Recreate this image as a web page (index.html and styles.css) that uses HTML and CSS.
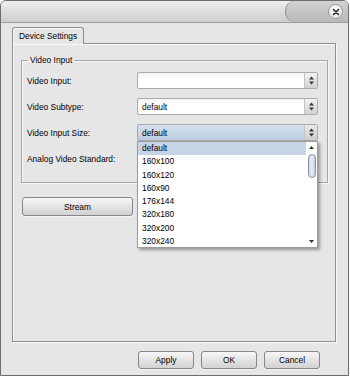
FILE: index.html
```html
<!DOCTYPE html>
<html lang="en">
<head>
    <meta charset="UTF-8">
    <meta name="viewport" content="width=device-width, initial-scale=1.0">
    <title>Device Settings</title>
    <link rel="stylesheet" href="styles.css">
</head>
<body>
    <div class="window">
        <!-- Title bar with close tab -->
        <div class="titlebar">
            <div class="close-tab">
                <span class="close-btn">
                    <svg width="8" height="8" viewBox="0 0 8 8"><path d="M1.5 1.5 L6.5 6.5 M6.5 1.5 L1.5 6.5" stroke="#2a2a2a" stroke-width="1.6" stroke-linecap="round"/></svg>
                </span>
            </div>
        </div>

        <div class="tabs">
            <div class="tab">Device Settings</div>
        </div>

        <div class="pane">
            <fieldset class="group">
                <legend>Video Input</legend>

                <div class="row">
                    <label>Video Input:</label>
                    <div class="combo">
                        <span class="combo-text"></span>
                        <span class="combo-arrow"><svg width="5" height="9" viewBox="0 0 5 9"><path d="M0 3.5 L2.5 0.5 L5 3.5 Z M0 5.5 L2.5 8.5 L5 5.5 Z" fill="#333"/></svg></span>
                    </div>
                </div>

                <div class="row">
                    <label>Video Subtype:</label>
                    <div class="combo">
                        <span class="combo-text">default</span>
                        <span class="combo-arrow"><svg width="5" height="9" viewBox="0 0 5 9"><path d="M0 3.5 L2.5 0.5 L5 3.5 Z M0 5.5 L2.5 8.5 L5 5.5 Z" fill="#333"/></svg></span>
                    </div>
                </div>

                <div class="row">
                    <label>Video Input Size:</label>
                    <div class="combo combo-open">
                        <span class="combo-text">default</span>
                        <span class="combo-arrow"><svg width="5" height="9" viewBox="0 0 5 9"><path d="M0 3.5 L2.5 0.5 L5 3.5 Z M0 5.5 L2.5 8.5 L5 5.5 Z" fill="#333"/></svg></span>

                        <!-- Open dropdown list -->
                        <div class="dropdown">
                            <ul class="options">
                                <li class="selected">default</li>
                                <li>160x100</li>
                                <li>160x120</li>
                                <li>160x90</li>
                                <li>176x144</li>
                                <li>320x180</li>
                                <li>320x200</li>
                                <li>320x240</li>
                            </ul>
                            <div class="scrollbar">
                                <svg class="sb-arrow" width="5" height="3" viewBox="0 0 5 3"><path d="M0 3 L2.5 0 L5 3 Z" fill="#333"/></svg>
                                <div class="thumb"></div>
                                <div class="sb-space"></div>
                                <svg class="sb-arrow" width="5" height="3" viewBox="0 0 5 3"><path d="M0 0 L2.5 3 L5 0 Z" fill="#333"/></svg>
                            </div>
                        </div>
                    </div>
                </div>

                <div class="row">
                    <label>Analog Video Standard:</label>
                    <div class="combo">
                        <span class="combo-text"></span>
                        <span class="combo-arrow"><svg width="5" height="9" viewBox="0 0 5 9"><path d="M0 3.5 L2.5 0.5 L5 3.5 Z M0 5.5 L2.5 8.5 L5 5.5 Z" fill="#333"/></svg></span>
                    </div>
                </div>
            </fieldset>

            <button class="btn stream-btn">Stream</button>
        </div>

        <!-- Dialog buttons -->
        <div class="footer">
            <button class="btn">Apply</button>
            <button class="btn">OK</button>
            <button class="btn">Cancel</button>
        </div>
    </div>
</body>
</html>
```

FILE: styles.css
```css
body {
    margin: 0;
    padding: 0;
    background-color: #ffffff;
    font-family: "Liberation Sans", Arial, sans-serif;
    font-size: 8.4px;
    color: #000;
}
.window {
    width: 349px;
    height: 376px;
    box-sizing: border-box;
    border: 1px solid #6c6c6c;
    border-radius: 6px 6px 0 0;
    background-color: #e6e6e6;
    overflow: hidden;
}
.titlebar {
    height: 21px;
    border-bottom: 1px solid #9c9c9c;
    background: linear-gradient(#eeeeee, #cdcdcd);
    display: flex;
    justify-content: flex-end;
}
.close-tab {
    width: 63px;
    height: 21px;
    box-sizing: border-box;
    border-left: 1px solid #8a8a8a;
    border-radius: 9px 0 0 9px / 11px 0 0 11px;
    background: linear-gradient(#d2d2d2, #b9b9b9);
    display: flex;
    align-items: center;
    justify-content: flex-end;
    padding-right: 5px;
}
.close-btn {
    width: 13px;
    height: 13px;
    border-radius: 50%;
    border: 1px solid #9a9a9a;
    background: radial-gradient(circle at 45% 35%, #ffffff, #dcdcdc);
    display: flex;
    align-items: center;
    justify-content: center;
}
.tabs {
    display: flex;
    margin-top: 4px;
    padding-left: 11px;
}
.tab {
    position: relative;
    z-index: 1;
    width: 72px;
    height: 17px;
    box-sizing: border-box;
    border: 1px solid #8c8c8c;
    border-bottom: none;
    border-radius: 3px 3px 0 0;
    background-color: #e6e6e6;
    box-shadow: inset 1px 1px 0 #fafafa;
    padding: 3px 0 0 6px;
    margin-bottom: -1px;
}
.pane {
    margin-left: 11px;
    width: 324px;
    height: 299px;
    box-sizing: border-box;
    border: 1px solid #8f8f8f;
    box-shadow: inset 1px 1px 0 #fafafa, 1px 1px 0 #fafafa;
    padding: 11px 7px 0 8px;
}
.group {
    margin: 0;
    width: 307px;
    height: 128px;
    box-sizing: border-box;
    border: 1px solid #a6a6a6;
    box-shadow: inset 1px 1px 0 #f8f8f8, 1px 1px 0 #f8f8f8;
    padding: 6px 9px 0 5px;
    display: flex;
    flex-direction: column;
    gap: 9px;
}
.group legend {
    padding: 0 2px;
    margin-left: 1px;
    line-height: 11px;
}
.row {
    display: flex;
    align-items: center;
    height: 17px;
}
.row label {
    width: 110px;
}
.combo {
    position: relative;
    width: 181px;
    height: 17px;
    box-sizing: border-box;
    border: 1px solid #ababab;
    border-radius: 2px;
    background: linear-gradient(#f4f4f4, #ffffff 40%);
    display: flex;
    align-items: center;
}
.combo-open {
    background: linear-gradient(#d6e1ee, #bccde2);
}
.combo-text {
    flex: 1;
    padding-left: 4px;
}
.combo-arrow {
    width: 12px;
    height: 15px;
    border-left: 1px solid #c4c4c4;
    background: linear-gradient(#f2f2f2, #d2d2d2);
    display: flex;
    align-items: center;
    justify-content: center;
}
.combo-open .combo-arrow {
    background: linear-gradient(#e8e8e8, #cfcfcf);
}
.dropdown {
    position: absolute;
    top: 16px;
    left: -1px;
    z-index: 5;
    width: 181px;
    height: 107px;
    box-sizing: border-box;
    border: 1px solid #9c9c9c;
    background-color: #ffffff;
    box-shadow: 2px 2px 3px rgba(0, 0, 0, 0.35);
    display: flex;
}
.options {
    list-style: none;
    margin: 0;
    padding: 0;
    flex: 1;
}
.options li {
    height: 13.25px;
    line-height: 13.25px;
    padding-left: 4px;
}
.options li.selected {
    background-color: #c5d4e7;
}
.scrollbar {
    width: 11px;
    display: flex;
    flex-direction: column;
    align-items: center;
    padding: 4px 0;
    box-sizing: border-box;
}
.sb-arrow {
    flex: none;
}
.thumb {
    margin-top: 5px;
    width: 8px;
    height: 24px;
    box-sizing: border-box;
    border: 1px solid #8596ae;
    border-radius: 4px;
    background: linear-gradient(90deg, #cfd9e6, #e8eef5, #bfcbdc);
}
.sb-space {
    flex: 1;
}
.btn {
    font-family: "Liberation Sans", Arial, sans-serif;
    font-size: 8.4px;
    color: #000;
    height: 18px;
    box-sizing: border-box;
    border: 1px solid #878787;
    border-radius: 3px;
    background: linear-gradient(#f8f8f8, #e4e4e4 50%, #d2d2d2);
    box-shadow: 0 1px 0 #f4f4f4;
    padding: 0;
}
.stream-btn {
    display: block;
    width: 111px;
    height: 19px;
    margin: 14px 0 0 1px;
}
.footer {
    display: flex;
    justify-content: flex-end;
    gap: 7px;
    padding: 9px 28px 0 0;
}
.footer .btn {
    width: 56px;
}
```
